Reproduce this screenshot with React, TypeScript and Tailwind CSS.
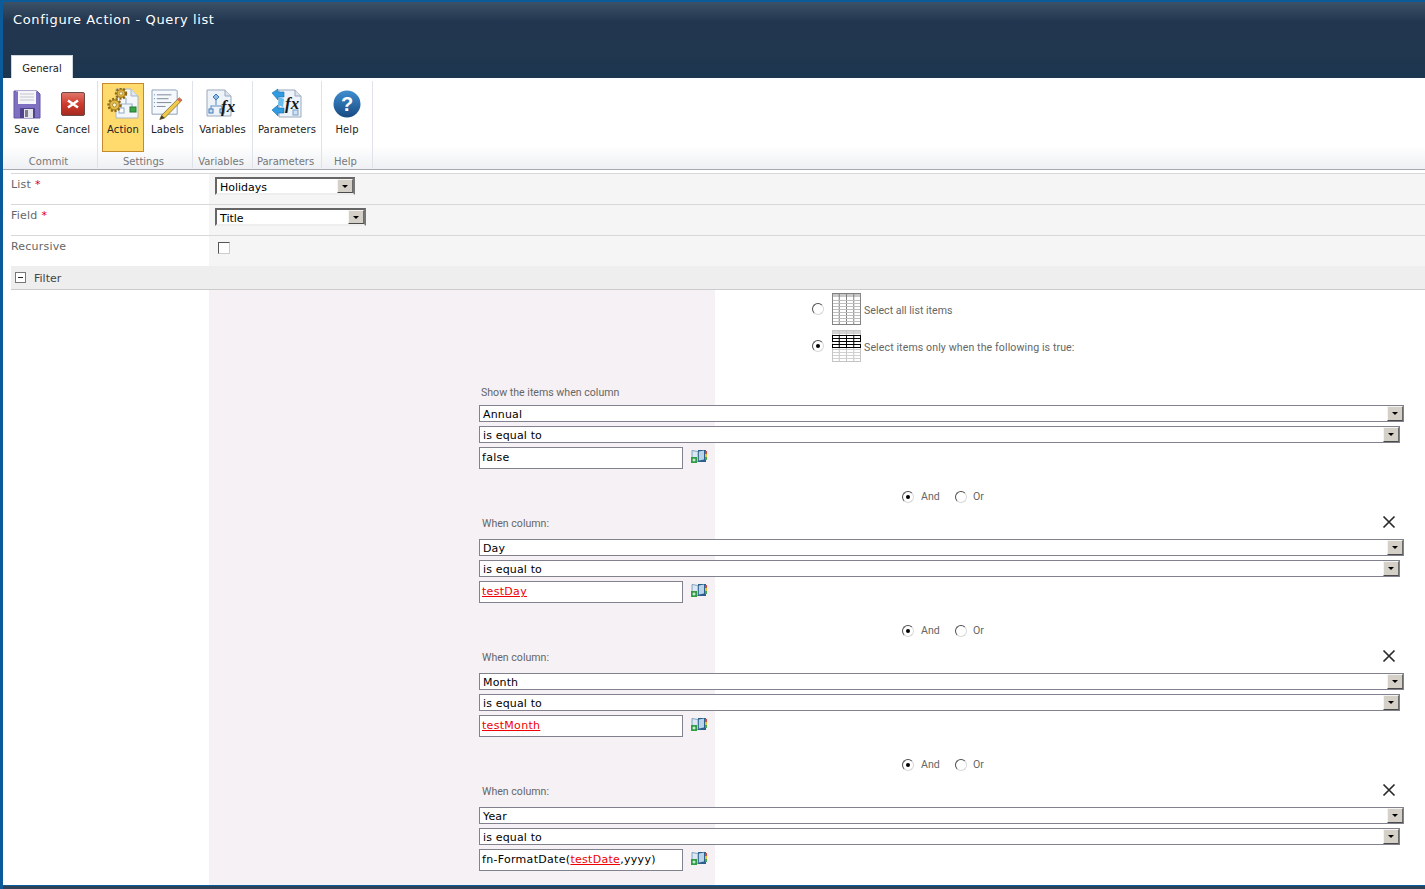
import React from 'react';

const ui = "font-['DejaVu_Sans',sans-serif]";

const SaveIcon = () => (
  <svg width="28" height="30" viewBox="0 0 28 30" className="block">
    <path d="M1 2h23l3 3v24H1z" fill="#8070c2" stroke="#6354a6" />
    <path d="M3 2h21v1H3z" fill="#a99ad8" />
    <rect x="5" y="2" width="18" height="13" fill="#f6f6f8" />
    <path d="M7 5h14M7 8h14M7 11h14" stroke="#c4c4d0" strokeWidth="1" />
    <rect x="7" y="19" width="15" height="10" fill="#4f4390" />
    <rect x="11" y="20" width="9" height="9" fill="#e4e4ea" />
    <rect x="12" y="21" width="3" height="7" fill="#7d7d8c" />
  </svg>
);

const CancelIcon = () => (
  <svg width="24" height="24" viewBox="0 0 24 24" className="block">
    <defs>
      <linearGradient id="cancelFill" x1="0" y1="0" x2="0" y2="1">
        <stop offset="0" stopColor="#e0776b" />
        <stop offset="0.5" stopColor="#cf3a2c" />
        <stop offset="1" stopColor="#a52a20" />
      </linearGradient>
    </defs>
    <rect x="0.5" y="0.5" width="23" height="23" rx="1.5" fill="url(#cancelFill)" stroke="#6d4a45" />
    <path d="M7 8.5l10 7M17 8.5l-10 7" stroke="#fff" strokeWidth="2.6" />
  </svg>
);

const Gear = ({ x, y, r }: { x: number; y: number; r: number }) => (
  <g>
    <circle cx={x} cy={y} r={r} fill="#d9ac2e" stroke="#8a6a1c" strokeWidth="2.4" strokeDasharray="2 1.6" />
    <circle cx={x} cy={y} r={r - 1.2} fill="#e2bb48" stroke="#8a6a1c" strokeWidth="0.6" />
    <circle cx={x} cy={y} r={r / 3} fill="#fff6d4" stroke="#8a6a1c" strokeWidth="0.6" />
  </g>
);

const ActionIcon = () => (
  <svg width="32" height="32" viewBox="0 0 32 32" className="block">
    <path d="M9 1h15l7 7v22H9z" fill="#f3f6fa" stroke="#a9b6c6" />
    <path d="M24 1v7h7" fill="#dfe6ee" stroke="#a9b6c6" />
    <path d="M19 10v6h-5v6M19 16h6v4" fill="none" stroke="#9db4cc" strokeWidth="1.2" />
    <rect x="12" y="20" width="5" height="5" fill="#fdfdfd" stroke="#8fa8c2" />
    <rect x="23" y="19" width="6" height="5" fill="#3aa648" stroke="#237a30" />
    <Gear x={14} y={5.5} r={5} />
    <Gear x={7.5} y={17} r={6} />
  </svg>
);

const LabelsIcon = () => (
  <svg width="33" height="31" viewBox="0 0 34 32" className="block">
    <path d="M1 1h25l1 1v24H1z" fill="#f5f8fc" stroke="#8da2b8" />
    <path d="M6 6h15M6 10h12M6 14h15M6 18h9" stroke="#7c8898" strokeWidth="1" />
    <path d="M3 6h1M3 10h1M3 14h1M3 18h1" stroke="#5a7fb0" strokeWidth="1" />
    <path d="M29 9l3 2.5L14 30l-5 1.5L11 27z" fill="#f1c84a" stroke="#7a6a2c" strokeWidth="0.8" />
    <path d="M29 9l3 2.5-2 2-3-2.5z" fill="#d8685c" />
    <path d="M11 27l3 3-5 1.5z" fill="#3a3a3a" />
  </svg>
);

const FxText = ({ x, y }: { x: number; y: number }) => (
  <text x={x} y={y} fontFamily="'Liberation Serif', serif" fontStyle="italic" fontWeight="700" fontSize="17" fill="#161616">
    fx
  </text>
);

const VariablesIcon = () => (
  <svg width="32" height="32" viewBox="0 0 32 32" className="block">
    <path d="M1 2h18l6 6v20H1z" fill="#eef3f9" stroke="#9aa9bb" />
    <path d="M19 2v6h6" fill="#dbe4ee" stroke="#9aa9bb" />
    <path d="M10 10v7M5 22v-4h11v4" fill="none" stroke="#5d8fc4" strokeWidth="1.1" />
    <path d="M10 6l3 3-3 3-3-3z" fill="#8fbbe4" stroke="#3f78b4" />
    <rect x="3" y="21" width="4" height="4" fill="#cfe2f4" stroke="#3f78b4" />
    <rect x="14" y="21" width="4" height="4" fill="#cfe2f4" stroke="#3f78b4" />
    <FxText x={15} y={24} />
  </svg>
);

const ParametersIcon = () => (
  <svg width="32" height="32" viewBox="0 0 32 32" className="block">
    <path d="M8 2h16l6 6v21H8z" fill="#eef3f9" stroke="#9aa9bb" />
    <path d="M24 2v6h6" fill="#dbe4ee" stroke="#9aa9bb" />
    <rect x="22" y="22" width="5" height="5" fill="#cfe2f4" stroke="#7d9fc4" />
    <path d="M1 5l6-4v3h6v5H7v3z" fill="#2f9be0" stroke="#1c6fb0" strokeWidth="0.6" />
    <path d="M1 22l6-5v3h6v5H7v3z" fill="#2f9be0" stroke="#1c6fb0" strokeWidth="0.6" />
    <path d="M8 9l5 2-1 8-5-2z" fill="#67bcf0" />
    <FxText x={14} y={21} />
  </svg>
);

const HelpIcon = () => (
  <svg width="28" height="28" viewBox="0 0 28 28" className="block">
    <defs>
      <linearGradient id="helpFill" x1="0" y1="0" x2="0" y2="1">
        <stop offset="0" stopColor="#3f8fd0" />
        <stop offset="1" stopColor="#174a82" />
      </linearGradient>
    </defs>
    <circle cx="14" cy="14" r="13.5" fill="url(#helpFill)" />
    <text x="14" y="21" textAnchor="middle" fontFamily="'Liberation Sans', sans-serif" fontWeight="700" fontSize="20" fill="#fff">
      ?
    </text>
  </svg>
);

const AllItemsIcon = () => (
  <svg width="29" height="32" viewBox="0 0 30 32" className="block" preserveAspectRatio="none">
    <rect x="0.5" y="0.5" width="29" height="31" fill="#fff" stroke="#808080" />
    <rect x="1" y="1" width="28" height="3" fill="#c8c8c8" />
    <path d="M7.5 1v30M15 1v30M22.5 1v30" stroke="#808080" />
    <path d="M1 7.5h28M1 10.5h28M1 13.5h28M1 16.5h28M1 19.5h28M1 22.5h28M1 25.5h28M1 28.5h28" stroke="#bdbdbd" />
  </svg>
);

const SomeItemsIcon = () => (
  <svg width="29" height="32" viewBox="0 0 30 32" className="block" preserveAspectRatio="none">
    <rect x="0.5" y="0.5" width="29" height="31" fill="#fff" stroke="#c4c4c4" />
    <rect x="1" y="1" width="28" height="3" fill="#d4d4d4" />
    <path d="M7.5 1v30M15 1v30M22.5 1v30" stroke="#c4c4c4" />
    <path d="M1 19.5h28M1 22.5h28M1 25.5h28M1 28.5h28" stroke="#cfcfcf" />
    <rect x="0.5" y="5.5" width="29" height="6" fill="#fff" stroke="#000" />
    <rect x="0.5" y="14.5" width="29" height="3" fill="#fff" stroke="#000" />
    <path d="M0 8.5h30M7.5 5v12M15 5v12M22.5 5v12" stroke="#000" />
  </svg>
);

const BookIcon = () => (
  <svg width="16" height="14" viewBox="0 0 16 14" className="block">
    <rect x="7" y="1" width="8" height="12" fill="#2b5f8e" />
    <path d="M1 1.5l6 1v10H1z" fill="#dbe8f3" stroke="#6b8fb0" strokeWidth="0.8" />
    <path d="M8 2.5l5-1v9l-5 1z" fill="#b9d3e8" />
    <rect x="14" y="2" width="2" height="3" fill="#d84a3a" />
    <rect x="14" y="5" width="2" height="3" fill="#e6c030" />
    <rect x="14" y="8" width="2" height="3" fill="#4aa84a" />
    <rect x="0" y="8" width="6" height="6" fill="#2f9e44" />
    <path d="M3 9.5v3M1.5 11h3" stroke="#fff" />
  </svg>
);

const Radio = ({ checked = false }: { checked?: boolean }) => (
  <span className="w-3 h-3 shrink-0 rounded-full bg-white border border-t-[#4f4f4f] border-l-[#4f4f4f] border-r-[#d8d8d8] border-b-[#d8d8d8] flex items-center justify-center">
    {checked && <span className="w-1 h-1 rounded-full bg-black" />}
  </span>
);

const Arrow = ({ className }: { className: string }) => (
  <span className={`shrink-0 flex items-center justify-center bg-[#d4d0c8] border border-t-[#f4f4f0] border-l-[#f4f4f0] border-r-[#6b6b6b] border-b-[#4a4a4a] ${className}`}>
    <span className="w-0 h-0 border-x-[3px] border-x-transparent border-t-[3px] border-t-black" />
  </span>
);

const TopSelect = ({ value, width }: { value: string; width: string }) => (
  <div className={`${width} h-[18px] flex items-stretch bg-white border-2 border-t-[#666] border-l-[#666] border-r-[#777] border-b-[#eee] pl-[3px] text-[11px] leading-[17px] text-black`}>
    <span className="flex-1">{value}</span>
    <Arrow className="w-4" />
  </div>
);

const FilterSelect = ({ value, className = '' }: { value: string; className?: string }) => (
  <div className={`h-[17px] flex items-stretch justify-between bg-white border border-[#82828f] pl-[3px] text-[11px] leading-[17px] tracking-[0.15px] text-black ${className}`}>
    <span>{value}</span>
    <Arrow className="w-4" />
  </div>
);

const Row = ({ label, required, children }: { label: string; required?: boolean; children: React.ReactNode }) => (
  <div className="flex h-[31px] border-t border-[#d8d8d8]">
    <div className="w-[198px] pt-1 text-[11px] leading-[14px] tracking-[0.2px] text-[#666]">
      {label}
      {required && <span className="ml-1 text-[#e00000]">*</span>}
    </div>
    <div className="flex-1 bg-[#f5f5f5] pl-[6px] pt-[3px]">{children}</div>
  </div>
);

const RibbonButton = ({
  label,
  icon,
  className = '',
  active = false,
}: {
  label: string;
  icon: React.ReactNode;
  className?: string;
  active?: boolean;
}) => (
  <div
    className={`h-[69px] flex flex-col items-center border ${
      active ? 'bg-[#ffdb6e] border-[#c48a2c]' : 'border-transparent'
    } ${className}`}
  >
    <div className="h-[39px] pt-px flex items-center justify-center">{icon}</div>
    <span className="text-[10px] leading-[14px] tracking-[0.1px] text-[#222] whitespace-nowrap">{label}</span>
  </div>
);

const RibbonGroup = ({ label, width, children }: { label: string; width: string; children: React.ReactNode }) => (
  <div className={`${width} h-[87px] flex flex-col border-r border-[#dfe3e9]`}>
    <div className="h-[70px] flex justify-center">{children}</div>
    <div className="h-[15px] mt-1 pr-[3px] text-center text-[10px] leading-[14px] text-[#777] whitespace-nowrap">{label}</div>
  </div>
);

function Red({ children }: { children: React.ReactNode }) {
  return <span className="text-[#f00000] underline">{children}</span>;
}

const conditions = [
  { column: 'Day', value: <Red>testDay</Red> },
  { column: 'Month', value: <Red>testMonth</Red> },
  {
    column: 'Year',
    value: (
      <>
        fn-FormatDate(<Red>testDate</Red>,yyyy)
      </>
    ),
  },
];

const Fields = ({ column, value }: { column: string; value: React.ReactNode }) => (
  <>
    <FilterSelect value={column} />
    <FilterSelect value="is equal to" className="mt-1 mr-1" />
    <div className="mt-1 flex">
      <div className="w-[204px] h-[22px] bg-white border border-[#82828f] pl-[2px] text-[11px] leading-[20px] tracking-[0.3px] text-black whitespace-nowrap">
        {value}
      </div>
      <div className="ml-2 mt-[2px]">
        <BookIcon />
      </div>
    </div>
  </>
);

export default function App() {
  return (
    <div className={`${ui} h-[889px] overflow-hidden flex flex-col bg-white border-l-[3px] border-[#0b5a99]`}>
      {/* Title bar */}
      <div className="h-[78px] shrink-0 relative border-t-2 border-[#0b5a99] bg-[linear-gradient(to_bottom,#3b5167,#22374f_26%,#21364f_70%,#1c3650)]">
        <div className="pl-[10px] pt-[10px] text-[13px] leading-4 tracking-[0.62px] text-white">Configure Action - Query list</div>
        <div className="absolute left-2 bottom-0 w-[62px] h-[23px] bg-white border border-b-0 border-[#cfd6de] text-center text-[10px] leading-[26px] text-[#222]">
          General
        </div>
      </div>

      {/* Ribbon */}
      <div className="h-[92px] shrink-0 border-b border-[#a6aab0] bg-[linear-gradient(to_bottom,#fff_74%,#eef0f3)]">
        <div className="flex pt-[3px]">
          <RibbonGroup label="Commit" width="w-[95px]">
            <div className="flex gap-[13px] pt-[2px] ml-[3px]">
              <RibbonButton label="Save" icon={<SaveIcon />} />
              <RibbonButton label="Cancel" icon={<CancelIcon />} />
            </div>
          </RibbonGroup>
          <RibbonGroup label="Settings" width="w-[95px]">
            <div className="flex gap-[6px] pt-[2px] mr-[3px]">
              <RibbonButton label="Action" icon={<ActionIcon />} active className="w-[42px]" />
              <RibbonButton label="Labels" icon={<LabelsIcon />} />
            </div>
          </RibbonGroup>
          <RibbonGroup label="Variables" width="w-[60px]">
            <RibbonButton label="Variables" icon={<VariablesIcon />} className="mt-[2px]" />
          </RibbonGroup>
          <RibbonGroup label="Parameters" width="w-[69px]">
            <RibbonButton label="Parameters" icon={<ParametersIcon />} className="mt-[2px]" />
          </RibbonGroup>
          <RibbonGroup label="Help" width="w-[51px]">
            <RibbonButton label="Help" icon={<HelpIcon />} className="mt-[2px]" />
          </RibbonGroup>
        </div>
      </div>

      {/* Form */}
      <div className="pl-2 pt-[3px] shrink-0">
        <Row label="List" required>
          <TopSelect value="Holidays" width="w-[140px]" />
        </Row>
        <Row label="Field" required>
          <TopSelect value="Title" width="w-[151px]" />
        </Row>
        <Row label="Recursive">
          <div className="ml-[3px] mt-[3px] w-3 h-3 bg-white border border-t-[#555] border-l-[#555] border-r-[#ccc] border-b-[#ccc]" />
        </Row>
        <div className="h-6 flex items-center gap-2 bg-[#eeeeee] border-b border-[#cccccc] pl-1 text-[11px] text-[#444]">
          <span className="w-[11px] h-[11px] border border-[#777] bg-white flex items-center justify-center">
            <span className="w-[5px] h-px bg-[#222]" />
          </span>
          <span className="pt-1">Filter</span>
        </div>
      </div>

      {/* Filter body */}
      <div className="flex-1 pl-[476px] bg-[linear-gradient(to_right,#fff_206px,#f5f1f5_206px,#f5f1f5_712px,#fff_712px)]">
        <div className="font-['Roboto',sans-serif] text-[10.6px] text-[#666] pr-[21px]">
          <div className="pt-[3px] pl-[333px]">
            <div className="h-8 flex items-center">
              <Radio />
              <span className="ml-2">
                <AllItemsIcon />
              </span>
              <span className="ml-[3px] pt-[3px]">Select all list items</span>
            </div>
            <div className="mt-[5px] h-8 flex items-center">
              <Radio checked />
              <span className="ml-2">
                <SomeItemsIcon />
              </span>
              <span className="ml-[3px] pt-[3px] tracking-[0.1px]">Select items only when the following is true:</span>
            </div>
          </div>

          <div className="mt-6 pl-[2px] h-[14px] leading-[14px]">Show the items when column</div>
          <div className={`mt-[5px] ${ui}`}>
            <Fields column="Annual" value="false" />
          </div>

          {conditions.map((c) => (
            <div key={c.column}>
              <div className="mt-[21px] h-[14px] pl-[423px] flex items-center">
                <Radio checked />
                <span className="ml-[7px] w-[34px]">And</span>
                <Radio />
                <span className="ml-[6px]">Or</span>
              </div>
              <div className="mt-[13px] h-[14px] pl-[3px] pr-[8px] flex items-center justify-between leading-[14px]">
                When column:
                <svg width="14" height="14" viewBox="0 0 14 14" className="block -mt-1">
                  <path d="M1.5 1.5l11 11M12.5 1.5l-11 11" stroke="#2a2a2a" strokeWidth="1.7" />
                </svg>
              </div>
              <div className={`mt-2 ${ui}`}>
                <Fields column={c.column} value={c.value} />
              </div>
            </div>
          ))}
        </div>
      </div>

      <div className="h-1 shrink-0 bg-[#2e4257] border-t border-[#0b5a99]" />
    </div>
  );
}
